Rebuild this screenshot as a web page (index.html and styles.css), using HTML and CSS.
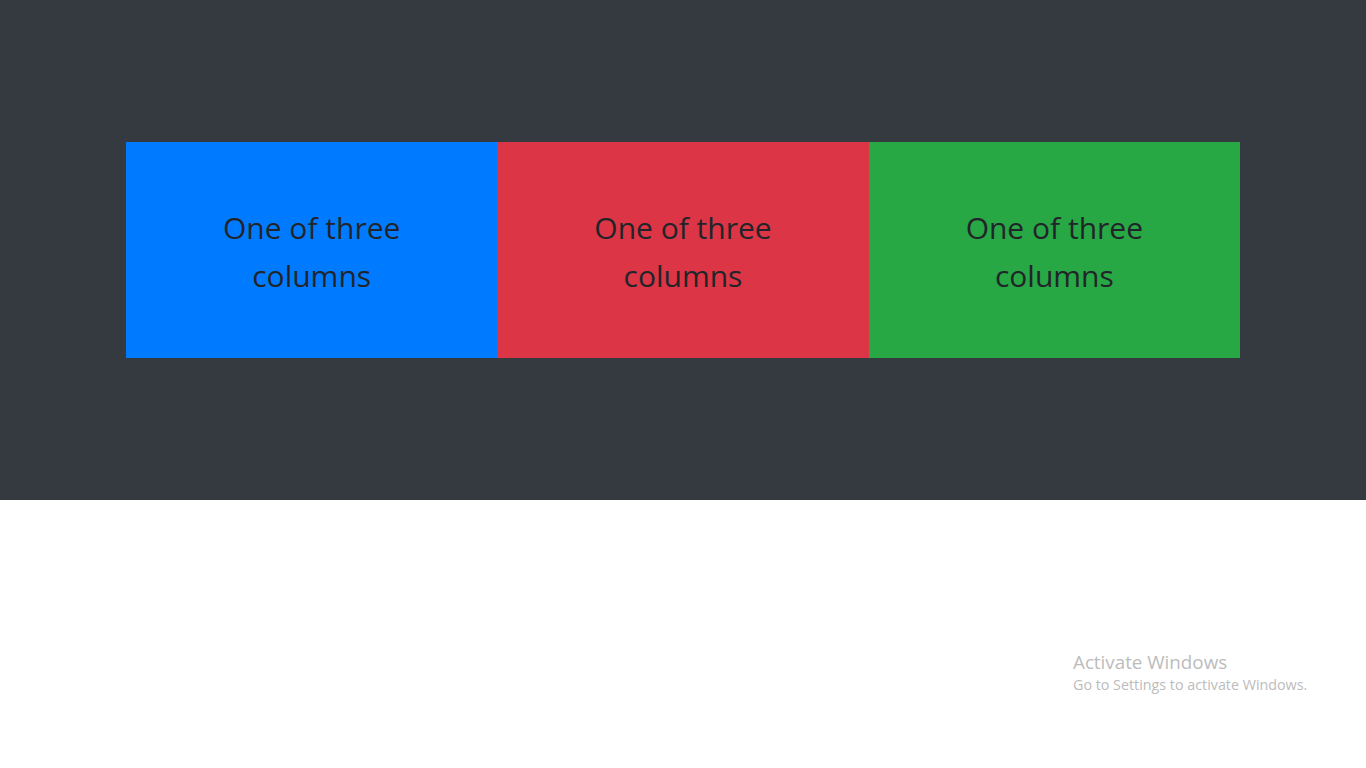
FILE: index.html
```html
<!DOCTYPE html>
<html lang="en">
<head>
<meta charset="utf-8">
<title>Three columns</title>
<link rel="stylesheet" href="styles.css">
</head>
<body>
<section class="hero">
  <div class="row">
    <div class="col col-blue">One of three columns</div>
    <div class="col col-red">One of three columns</div>
    <div class="col col-green">One of three columns</div>
  </div>
</section>
<div class="watermark">
  <div class="wm-title">Activate Windows</div>
  <div class="wm-sub">Go to Settings to activate Windows.</div>
</div>
</body>
</html>
```
FILE: styles.css
```css
html, body {
  margin: 0;
  padding: 0;
  background: #ffffff;
}
body {
  font-family: "Open Sans", "Noto Sans", sans-serif;
  color: #212529;
}
.hero {
  height: 500px;
  background: #343a40;
  display: flex;
  align-items: center;
  justify-content: center;
}
.row {
  width: 1114px;
  display: grid;
  grid-template-columns: repeat(3, 1fr);
}
.col {
  height: 216px;
  box-sizing: border-box;
  display: flex;
  align-items: center;
  justify-content: center;
  text-align: center;
  padding: 4px 90px 0;
  font-size: 30px;
  line-height: 48px;
  color: #212529;
}
.col-blue { background: #007bff; }
.col-red { background: #dc3545; }
.col-green { background: #28a745; }
.watermark {
  position: absolute;
  left: 1073px;
  top: 650px;
  color: #bcbcbc;
  font-family: "Open Sans", sans-serif;
}
.wm-title {
  font-size: 18.8px;
  line-height: 24px;
}
.wm-sub {
  font-size: 14.3px;
  line-height: 21px;
}
```
